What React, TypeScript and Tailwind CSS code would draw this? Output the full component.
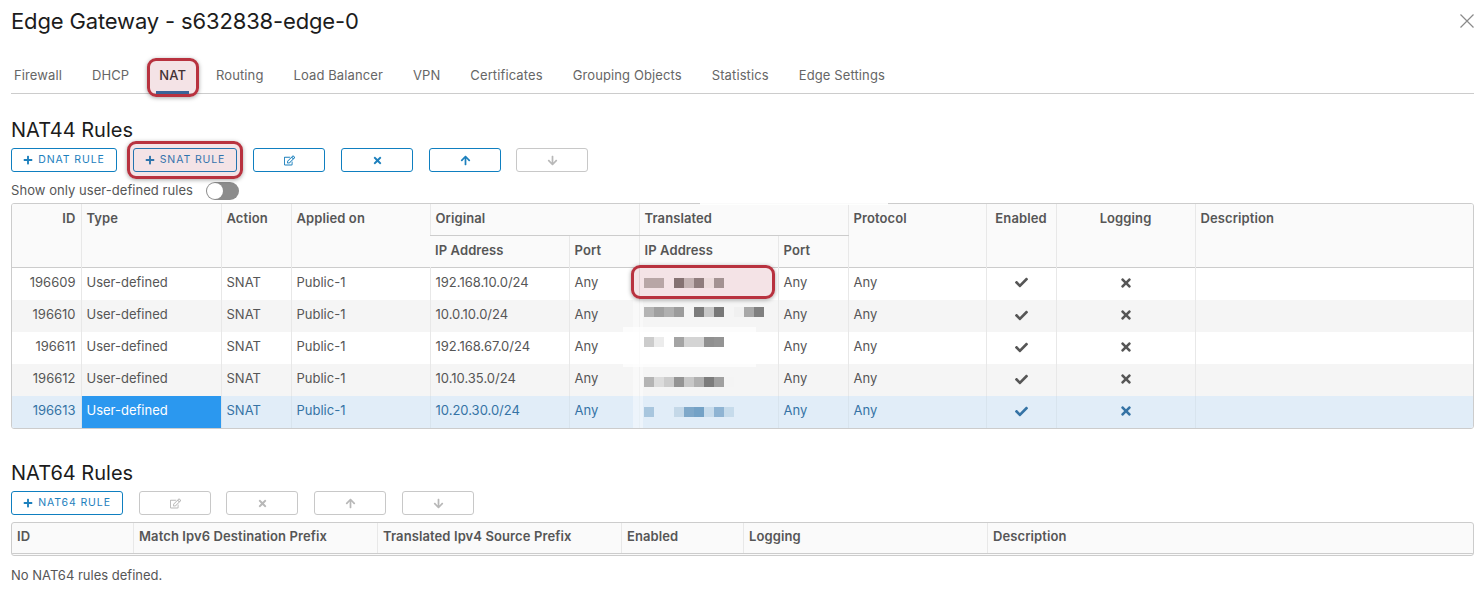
import type { ReactNode } from "react";
import { FaArrowDown, FaArrowUp, FaCheck, FaPlus, FaRegEdit, FaTimes } from "react-icons/fa";

const tabs = ["Firewall", "DHCP", "NAT", "Routing", "Load Balancer", "VPN", "Certificates", "Grouping Objects", "Statistics", "Edge Settings"];

const rows = [
  { id: "196609", ip: "192.168.10.0/24" },
  { id: "196610", ip: "10.0.10.0/24" },
  { id: "196611", ip: "192.168.67.0/24" },
  { id: "196612", ip: "10.10.35.0/24" },
  { id: "196613", ip: "10.20.30.0/24" },
];

// mosaic of the redacted addresses, one swatch per 10px
const blur: string[][] = [
  ["#b8a6a6", "#b8a6a6", "", "#857272", "#c4b3b3", "#8f7d7d", "#ecdcdc", "#a39292"],
  ["#b4b4b4", "#a0a0a0", "#b0b0b0", "#9c9c9c", "", "#7c7c7c", "#c8c8c8", "#787878", "", "#f0f0f0", "#a8a8a8", "#808080"],
  ["#cccccc", "#ececec", "", "#a4a4a4", "#d4d4d4", "#d4d4d4", "#909090", "#949494"],
  ["#b4b4b4", "#dcdcdc", "#cccccc", "#949494", "#c8c8c8", "#b0b0b0", "#7c7c7c", "#a0a0a0", "#f4f4f4"],
  ["#a8c6de", "", "", "#c4d8e8", "#7fa8c9", "#74a2c6", "#c8dcec", "#8fb4d3", "#c6dbeb"],
];
// the mosaic does not sit on the row centre line
const blurShift = ["", "-translate-y-[3px]", "-translate-y-[5px]", "translate-y-[3px]", "translate-y-px"];

function ActionButton({ children, disabled, className = "" }: { children: ReactNode; disabled?: boolean; className?: string }) {
  return (
    <button
      className={`flex h-6 items-center justify-center gap-[5px] rounded-[3px] border bg-white text-[10.5px] font-normal uppercase tracking-[0.085em] ${
        disabled ? "border-[#c8c8c8] text-[#b8b8b8]" : "border-[#0f7fc0] text-[#1d80bd]"
      } ${className}`}
    >
      {children}
    </button>
  );
}

function Redline({ className }: { className: string }) {
  return <div className={`pointer-events-none absolute rounded-[9px] border-[3px] border-[#b8323f] bg-[#a82a3a]/[0.13] shadow-[0_1px_4px_rgba(0,0,0,0.35)] ${className}`} />;
}

function Cell({ children, className = "", sel, first }: { children?: ReactNode; className?: string; sel?: boolean; first?: boolean }) {
  return (
    <td className={`border-l px-[5px] pb-[2px] align-middle first:border-l-0 ${first ? "h-[33px]" : "h-8"} ${sel ? "border-[#d8e4ee]" : "border-[#e8e8e8]"} ${className}`}>
      {children}
    </td>
  );
}

function Head({ children, className = "text-left", ...rest }: { children?: ReactNode; className?: string; colSpan?: number; rowSpan?: number }) {
  return (
    <th {...rest} className={`h-[31px] border-l border-[#e8e8e8] px-[5px] align-top pt-[5px] font-semibold tracking-[0.1px] first:border-l-0 ${className}`}>
      {children}
    </th>
  );
}

export default function App() {
  return (
    <div className="relative h-[591px] w-[1483px] overflow-hidden bg-white pl-[11px] pr-[9px] text-[13px] text-[#565656] [font-family:Inter,'Liberation_Sans',sans-serif]">
      <div className="flex h-[42px] items-center justify-between">
        <h1 className="text-[22px] font-normal leading-none tracking-[-0.15px] text-[#1c1c1c]">Edge Gateway - s632838-edge-0</h1>
        <svg className="h-[14px] w-[14px]" viewBox="0 0 14 14" stroke="#8a8a8a" strokeWidth="1.2" aria-hidden>
          <path d="M.5.5l13 13M13.5.5l-13 13" />
        </svg>
      </div>

      <div className="mt-[15px] flex h-[37px] gap-[30px] border-b border-[#cccccc] pl-[3px] tracking-[0.11px]">
        {tabs.map((t) => (
          <div key={t} className={`relative flex items-start pt-[9px] ${t === "NAT" ? "font-medium text-[#333333]" : "text-[#666666]"}`}>
            {t}
            {t === "NAT" && <div className="absolute -inset-x-[3px] bottom-[-1px] h-[3px] bg-[#2a6ea6]" />}
          </div>
        ))}
      </div>

      <h2 className="mt-[24px] text-[20px] font-normal leading-6 text-[#1c1c1c]">NAT44 Rules</h2>
      <div className="mt-[6px] flex gap-4">
        <ActionButton className="w-[106px]"><FaPlus className="text-[10px]" />DNAT Rule</ActionButton>
        <ActionButton className="w-[104px]"><FaPlus className="text-[10px]" />SNAT Rule</ActionButton>
        <ActionButton className="w-[72px]"><FaRegEdit className="text-[11px]" /></ActionButton>
        <ActionButton className="w-[72px]"><FaTimes className="text-[11px]" /></ActionButton>
        <ActionButton className="w-[72px]"><FaArrowUp className="text-[11px]" /></ActionButton>
        <ActionButton disabled className="ml-[-1px] w-[72px]"><FaArrowDown className="text-[11px]" /></ActionButton>
      </div>
      <div className="mt-[10px] flex h-[18px] items-center gap-[13px]">
        <span className="tracking-[0.05px]">Show only user-defined rules</span>
        <div className="flex h-[18px] w-[33px] items-center rounded-full bg-[#8c8c8c] pl-[1px]">
          <div className="h-4 w-4 rounded-full bg-white" />
        </div>
      </div>

      <div className="mt-[3px] overflow-hidden rounded-[3px] border border-[#cccccc]">
        <table className="w-full table-fixed border-collapse">
          <colgroup>
            {[69, 140, 70, 139, 139, 70, 139, 70, 138, 70, 139].map((w, i) => (
              <col key={i} style={{ width: w }} />
            ))}
            <col />
          </colgroup>
          <thead className="bg-[#fafafa]">
            <tr>
              <Head rowSpan={2} className="text-right">ID</Head>
              <Head rowSpan={2}>Type</Head>
              <Head rowSpan={2}>Action</Head>
              <Head rowSpan={2}>Applied on</Head>
              <Head colSpan={2} className="border-b border-b-[#cccccc] text-left">Original</Head>
              <Head colSpan={2} className="border-b border-b-[#cccccc] text-left">Translated</Head>
              <Head rowSpan={2}>Protocol</Head>
              <Head rowSpan={2} className="text-center">Enabled</Head>
              <Head rowSpan={2} className="text-center">Logging</Head>
              <Head rowSpan={2}>Description</Head>
            </tr>
            <tr className="h-[32px] border-b border-[#cccccc]">
              <Head className="h-[32px] text-left">IP Address</Head>
              <Head className="h-[32px] text-left">Port</Head>
              <Head className="h-[32px] text-left">IP Address</Head>
              <Head className="h-[32px] text-left">Port</Head>
            </tr>
          </thead>
          <tbody>
            {rows.map((r, i) => {
              const sel = i === 4;
              const first = i === 0;
              return (
                <tr key={r.id} className={sel ? "bg-[#e1edf8] text-[#3573a5]" : i % 2 === 1 ? "bg-[#f5f5f5]" : "bg-white"}>
                  <Cell sel={sel} first={first} className="text-right">{r.id}</Cell>
                  <Cell sel={sel} first={first} className={sel ? "bg-[#2b98ef] text-white" : ""}>User-defined</Cell>
                  <Cell sel={sel} first={first}>SNAT</Cell>
                  <Cell sel={sel} first={first}>Public-1</Cell>
                  <Cell sel={sel} first={first}>{r.ip}</Cell>
                  <Cell sel={sel} first={first}>Any</Cell>
                  <Cell sel={sel} first={first}>
                    <div className={`relative z-10 -ml-px flex ${blurShift[i]}`}>
                      {blur[i].map((c, j) => (
                        <span key={j} className="h-[10px] w-[10px]" style={{ background: c || "transparent" }} />
                      ))}
                    </div>
                  </Cell>
                  <Cell sel={sel} first={first}>Any</Cell>
                  <Cell sel={sel} first={first}>Any</Cell>
                  <Cell sel={sel} first={first}><FaCheck className="mx-auto text-[13px]" /></Cell>
                  <Cell sel={sel} first={first}><FaTimes className="mx-auto text-[14px]" /></Cell>
                  <Cell sel={sel} first={first} />
                </tr>
              );
            })}
          </tbody>
        </table>
      </div>

      <h2 className="mt-[32px] text-[20px] font-normal leading-6 text-[#1c1c1c]">NAT64 Rules</h2>
      <div className="mt-[6px] flex gap-4">
        <ActionButton className="w-[112px]"><FaPlus className="text-[10px]" />NAT64 Rule</ActionButton>
        <ActionButton disabled className="w-[72px]"><FaRegEdit className="text-[11px]" /></ActionButton>
        <ActionButton disabled className="ml-[-1px] w-[72px]"><FaTimes className="text-[11px]" /></ActionButton>
        <ActionButton disabled className="w-[72px]"><FaArrowUp className="text-[11px]" /></ActionButton>
        <ActionButton disabled className="w-[72px]"><FaArrowDown className="text-[11px]" /></ActionButton>
      </div>
      <div className="mt-[7px] overflow-hidden rounded-[3px] border border-[#cccccc] bg-[#fafafa] pb-px">
        <div className="grid h-[31px] grid-cols-[121px_244px_244px_122px_244px_1fr] border-b border-[#cccccc] font-semibold tracking-[0.1px]">
          {["ID", "Match Ipv6 Destination Prefix", "Translated Ipv4 Source Prefix", "Enabled", "Logging", "Description"].map((h) => (
            <div key={h} className="border-l border-[#e8e8e8] px-[5px] pt-[4px] first:border-l-0">{h}</div>
          ))}
        </div>
      </div>
      <p className="mt-[10px]">No NAT64 rules defined.</p>

      {/* paint-over smudges and red callouts sitting on top of the screenshot */}
      <div className="pointer-events-none absolute left-[623px] top-[327px] h-[40px] w-[133px] bg-white/70" />
      <div className="pointer-events-none absolute left-[633px] top-[300px] h-[128px] w-[10px] bg-white/40" />
      <div className="pointer-events-none absolute left-[700px] top-[200px] h-[5px] w-[188px] bg-white/90" />
      <Redline className="left-[147px] top-[58px] h-[39px] w-[52px]" />
      <Redline className="left-[127px] top-[141px] h-[38px] w-[116px]" />
      <Redline className="left-[631px] top-[265px] h-[34px] w-[144px]" />
    </div>
  );
}
